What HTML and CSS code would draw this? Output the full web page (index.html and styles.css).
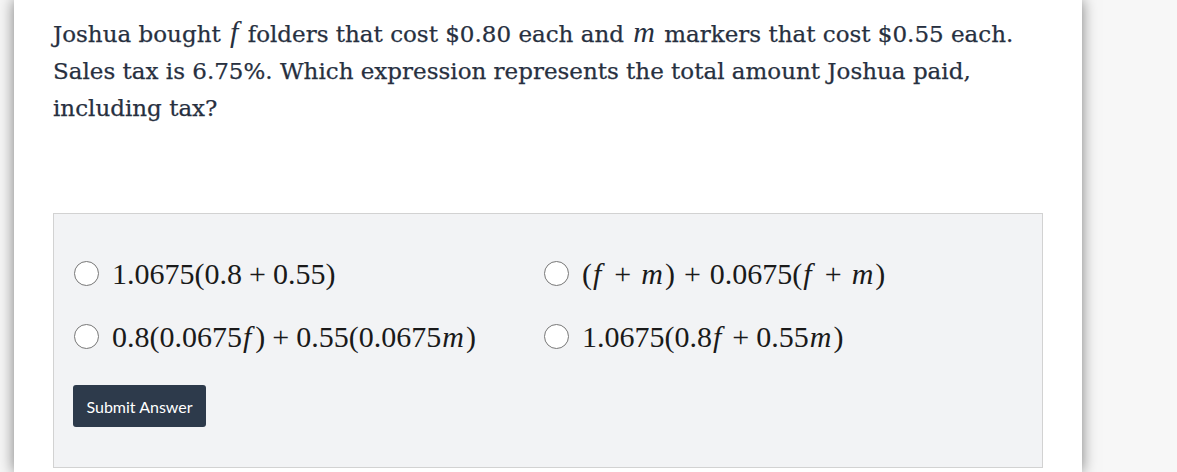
FILE: index.html
```html
<!DOCTYPE html>
<html lang="en">
<head>
<meta charset="utf-8">
<title>Question</title>
<link rel="stylesheet" href="styles.css">
</head>
<body>
<div class="page">
  <main class="card">
    <p class="question">Joshua bought <span class="mi">f</span> folders that cost $0.80 each and <span class="mi">m</span> markers that cost $0.55 each. Sales tax is 6.75%. Which expression represents the total amount Joshua paid, including tax?</p>
    <section class="answers">
      <div class="options">
        <label class="option"><span class="radio"></span><span class="math">1.0675(0.8<span class="op">+</span>0.55)</span></label>
        <label class="option"><span class="radio"></span><span class="math">(<span class="mi f">f</span><span class="op wide">+</span><span class="mi m">m</span>)<span class="op wide">+</span>0.0675(<span class="mi f">f</span><span class="op wide">+</span><span class="mi m">m</span>)</span></label>
        <label class="option"><span class="radio"></span><span class="math">0.8(0.0675<span class="mi f">f</span>)<span class="op">+</span>0.55(0.0675<span class="mi m">m</span>)</span></label>
        <label class="option"><span class="radio"></span><span class="math">1.0675(0.8<span class="mi f">f</span><span class="op">+</span>0.55<span class="mi m">m</span>)</span></label>
      </div>
      <button class="submit" type="button">Submit Answer</button>
    </section>
  </main>
  <div class="side"></div>
</div>
</body>
</html>
```
FILE: styles.css
```css
html, body {
  margin: 0;
  padding: 0;
}
body {
  background: #f6f6f6;
  width: 1177px;
  height: 472px;
  overflow: hidden;
}
.page {
  display: flex;
  height: 472px;
}
.card {
  margin-left: 14px;
  width: 1068px;
  flex: none;
  background: #ffffff;
  box-shadow: 0 0 14px rgba(0, 0, 0, 0.5);
  padding: 16px 0 0 39px;
  box-sizing: border-box;
  position: relative;
  z-index: 1;
}
.question {
  margin: 0;
  width: 990px;
  font-family: "DejaVu Serif", Georgia, serif;
  font-size: 23px;
  line-height: 37px;
  color: #27303f;
  -webkit-text-stroke: 0.25px #27303f;
}
.question .mi {
  font-family: "Liberation Serif", serif;
  font-style: italic;
  font-size: 30px;
  line-height: 1;
  padding: 0 2px;
  -webkit-text-stroke: 0;
}
.answers {
  margin-top: 86px;
  width: 990px;
  height: 255px;
  box-sizing: border-box;
  border: 1px solid #d2d2d2;
  background: #f2f3f5;
  padding: 28px 20px 0 19px;
}
.options {
  display: grid;
  grid-template-columns: 470px 1fr;
  grid-auto-rows: 63px;
}
.option {
  display: flex;
  align-items: center;
  gap: 13px;
  color: #1a1a1a;
}
.radio {
  width: 23px;
  height: 23px;
  border: 1px solid #777;
  border-radius: 50%;
  background: #fff;
  flex: none;
  margin-left: 1px;
}
.math {
  font-family: "Liberation Serif", serif;
  font-size: 30px;
  color: #1a1a1a;
  white-space: nowrap;
}
.math .mi {
  font-style: italic;
}
.math .f {
  padding: 0 4px 0 1px;
}
.math .m {
  padding: 0 2px 0 1px;
}
.math .op {
  padding: 0 7px;
}
.math .op.wide {
  padding: 0 9px;
}
.submit {
  margin-top: 17px;
  width: 133px;
  height: 42px;
  border: none;
  border-radius: 3px;
  background: #2d3a4b;
  color: #ffffff;
  font-family: Lato, sans-serif;
  font-size: 16px;
  padding: 0;
}
.side {
  flex: 1;
  background: #f7f7f7;
}
```
